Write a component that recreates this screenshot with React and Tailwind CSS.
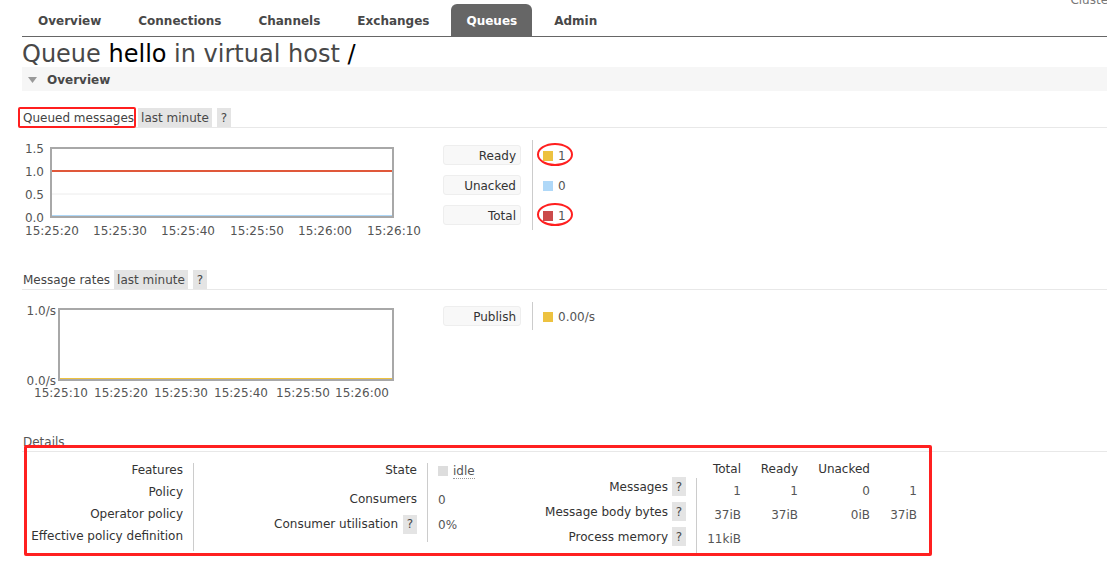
import React from "react";

const tabs = ["Overview", "Connections", "Channels", "Exchanges", "Queues", "Admin"];

function Help({ className = "" }) {
    return (
        <span className={`inline-flex h-[19px] w-[14px] items-center justify-center bg-[#e4e4e4] text-[#484848] ${className}`}>?</span>
    );
}

function SectionHead({ title, boxed }) {
    return (
        <div className="relative flex h-[20px] items-stretch border-b border-[#e8e8e8]">
            <span className="flex items-center pl-px text-[#444]">{title}</span>
            <span className="ml-[4px] flex items-center bg-[#e4e4e4] px-[3px] text-[#484848]">last minute</span>
            <Help className="ml-[5px] h-auto" />
            {boxed && (
                <span className="absolute left-[-4px] top-[-1px] h-[21px] w-[118px] rounded-[2px] border-2 border-[#ff1f1f]" />
            )}
        </div>
    );
}

function LegendLabel({ children }) {
    return (
        <div className="flex h-[20px] items-center justify-end rounded-[3px] border border-[#eee] bg-[#f8f8f8] pr-[4px] pt-px text-[#333]">
            {children}
        </div>
    );
}

function LegendValue({ color, value, ring }) {
    return (
        <div className="relative flex h-[20px] items-center pt-px text-[#555]">
            <span className="mr-[5px] h-[10px] w-[10px]" style={{ background: color }} />
            {value}
            {ring && (
                <span className="absolute left-[-6px] top-[-2px] h-[23px] w-[36px] rounded-[50%] border-2 border-[#ff1f1f]" />
            )}
        </div>
    );
}

function QueuedChart() {
    const xs = [30, 98, 166, 235, 303, 372];
    const labels = ["15:25:20", "15:25:30", "15:25:40", "15:25:50", "15:26:00", "15:26:10"];
    return (
        <svg width="410" height="102" className="shrink-0">
            <line x1="30" x2="370" y1="56" y2="56" stroke="#ececec" />
            <line x1="30" x2="370" y1="33" y2="33" stroke="#e0583a" strokeWidth="2" />
            <line x1="30" x2="370" y1="78" y2="78" stroke="#afd8f8" strokeWidth="2" />
            <rect x="29" y="10" width="342" height="69" fill="none" stroke="#a8a8a8" strokeWidth="2" />
            <g fontFamily="DejaVu Sans, sans-serif" fontSize="12" fill="#545454">
                <text x="22" y="15.4" textAnchor="end">1.5</text>
                <text x="22" y="38.4" textAnchor="end">1.0</text>
                <text x="22" y="61.4" textAnchor="end">0.5</text>
                <text x="22" y="84.4" textAnchor="end">0.0</text>
                {labels.map((l, i) => (
                    <text key={l} x={xs[i]} y="97.4" textAnchor="middle">{l}</text>
                ))}
            </g>
        </svg>
    );
}

function RatesChart() {
    const xs = [39, 99, 159, 219, 281, 340];
    const labels = ["15:25:10", "15:25:20", "15:25:30", "15:25:40", "15:25:50", "15:26:00"];
    return (
        <svg width="410" height="100" className="shrink-0">
            <line x1="38" x2="370" y1="79" y2="79" stroke="#edc240" strokeWidth="2" />
            <rect x="37" y="9" width="334" height="71" fill="none" stroke="#a8a8a8" strokeWidth="2" />
            <g fontFamily="DejaVu Sans, sans-serif" fontSize="12" fill="#555">
                <text x="34" y="15.4" textAnchor="end">1.0/s</text>
                <text x="34" y="85" textAnchor="end">0.0/s</text>
                {labels.map((l, i) => (
                    <text key={l} x={xs[i]} y="97.4" textAnchor="middle">{l}</text>
                ))}
            </g>
        </svg>
    );
}

const cols = ["w-[44px]", "w-[57px]", "w-[72px]", "w-[47px]"];

function ValRow({ vals }) {
    return (
        <div className="flex h-[24px] items-center pt-px text-[#555]">
            {vals.map((v, i) => (
                <span key={i} className={`${cols[i]} text-right`}>{v}</span>
            ))}
        </div>
    );
}

export default function App() {
    return (
        <div className="relative h-[564px] w-[1107px] overflow-hidden bg-white font-['DejaVu_Sans',sans-serif] text-[12px] text-[#484848]">
            {/* menu */}
            <div className="relative ml-[22px] flex h-[37px] items-end gap-[7px] border-b border-[#666] pl-px">
                {tabs.map((t) => (
                    <span
                        key={t}
                        className={`flex h-[32px] items-center rounded-t-[6px] px-[15px] pt-[2px] font-bold ${
                            t === "Queues" ? "bg-[#666] text-white" : "text-[#484848]"
                        }`}
                    >
                        {t}
                    </span>
                ))}
                <span className="absolute right-[-6px] top-[-9px] text-[#777]">Cluster</span>
            </div>

            <h1 className="ml-[22px] mt-[3px] h-[27px] text-[24px] leading-[29px] text-[#484848]">
                Queue <span className="text-black">hello</span> in virtual host <span className="text-black">/</span>
            </h1>

            <div className="ml-[22px] flex h-[24px] items-center bg-[#f6f6f6] pl-[6px] pt-px">
                <svg width="9" height="6" viewBox="0 0 9 6">
                    <path d="M0 0H9L4.5 6Z" fill="#999" />
                </svg>
                <span className="ml-[10px] font-bold text-[#484848]">Overview</span>
            </div>

            <div className="ml-[22px]">
                {/* queued messages */}
                <div className="mt-[17px]">
                    <SectionHead title="Queued messages" boxed />
                </div>
                <div className="mt-[10px] flex items-start">
                    <QueuedChart />
                    <div className="ml-[11px] mt-[2px] flex">
                        <div className="flex w-[78px] flex-col gap-[10px] py-[5px]">
                            <LegendLabel>Ready</LegendLabel>
                            <LegendLabel>Unacked</LegendLabel>
                            <LegendLabel>Total</LegendLabel>
                        </div>
                        <div className="ml-[11px] w-px bg-[#ccc]" />
                        <div className="flex flex-col gap-[10px] py-[5px] pl-[10px]">
                            <LegendValue color="#edc240" value="1" ring />
                            <LegendValue color="#afd8f8" value="0" />
                            <LegendValue color="#cb4b4b" value="1" ring />
                        </div>
                    </div>
                </div>

                {/* message rates */}
                <div className="mt-[30px]">
                    <SectionHead title="Message rates" />
                </div>
                <div className="mt-[10px] flex items-start">
                    <RatesChart />
                    <div className="ml-[11px] mt-[2px] flex">
                        <div className="flex w-[78px] flex-col py-[4px]">
                            <LegendLabel>Publish</LegendLabel>
                        </div>
                        <div className="ml-[11px] w-px bg-[#ccc]" />
                        <div className="flex flex-col py-[4px] pl-[10px]">
                            <LegendValue color="#edc240" value="0.00/s" />
                        </div>
                    </div>
                </div>

                {/* details */}
                <div className="relative mt-[32px]">
                    <div className="flex h-[20px] items-center border-b border-[#e8e8e8] pl-px pt-px text-[#555]">Details</div>
                    <div className="mt-[6px] flex text-[#333]">
                        <div className="flex w-[171px] flex-col pr-[10px] pt-px text-right">
                            <span className="h-[22px] leading-[22px]">Features</span>
                            <span className="h-[22px] leading-[22px]">Policy</span>
                            <span className="h-[22px] leading-[22px]">Operator policy</span>
                            <span className="h-[22px] leading-[22px]">Effective policy definition</span>
                        </div>
                        <div className="mt-[5px] h-[88px] w-px bg-[#ccc]" />

                        <div className="flex w-[233px] flex-col pr-[10px] pt-px">
                            <span className="flex h-[22px] items-center justify-end">State</span>
                            <span className="mt-[7px] flex h-[22px] items-center justify-end">Consumers</span>
                            <span className="mt-[3px] flex h-[22px] items-center justify-end">
                                Consumer utilisation
                                <Help className="ml-[5px] h-[18px]" />
                            </span>
                        </div>
                        <div className="mt-[5px] h-[79px] w-px bg-[#ccc]" />

                        <div className="flex w-[100px] flex-col pl-[10px] pt-[2px] text-[#555]">
                            <span className="flex h-[22px] items-center">
                                <span className="mr-[5px] h-[10px] w-[10px] bg-[#ddd]" />
                                <span className="border-b border-dotted border-[#999] leading-[14px]">idle</span>
                            </span>
                            <span className="mt-[7px] flex h-[22px] items-center">0</span>
                            <span className="mt-[3px] flex h-[22px] items-center">0%</span>
                        </div>

                        <div className="flex w-[168px] flex-col pr-[10px] pt-[16px]">
                            {["Messages", "Message body bytes", "Process memory"].map((l) => (
                                <span key={l} className="flex h-[25px] items-center justify-end">
                                    {l}
                                    <Help className="ml-[4px] h-[18px]" />
                                </span>
                            ))}
                        </div>

                        <div className="flex flex-col">
                            <div className="flex h-[20px] items-center pl-px pt-[2px]">
                                {["Total", "Ready", "Unacked", ""].map((h, i) => (
                                    <span key={i} className={`${cols[i]} text-right`}>{h}</span>
                                ))}
                            </div>
                            <div className="border-l border-[#ccc] pb-[3px]">
                                <ValRow vals={["1", "1", "0", "1"]} />
                                <ValRow vals={["37iB", "37iB", "0iB", "37iB"]} />
                                <ValRow vals={["11kiB", "", "", ""]} />
                            </div>
                        </div>
                    </div>
                    <span className="absolute left-[2px] top-[13px] h-[111px] w-[908px] rounded-[2px] border-[3px] border-[#ff2020]" />
                </div>
            </div>
        </div>
    );
}
